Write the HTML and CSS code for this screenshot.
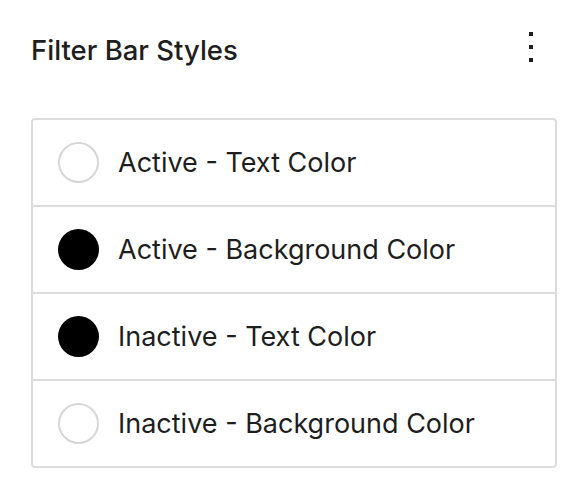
FILE: index.html
```html
<!DOCTYPE html>
<html>
<head>
<meta charset="utf-8">
<link rel="stylesheet" href="styles.css">
</head>
<body>
<div class="panel">
  <div class="header">
    <h2 class="title">Filter Bar Styles</h2>
    <button class="more" aria-label="Options">
      <svg width="6" height="32" viewBox="0 0 6 32"><rect x="1" y="1" width="4" height="4" fill="#1e1e1e"/><rect x="1" y="14" width="4" height="4" fill="#1e1e1e"/><rect x="1" y="27" width="4" height="4" fill="#1e1e1e"/></svg>
    </button>
  </div>
  <div class="list">
    <div class="row"><span class="swatch empty"></span><span class="label">Active - Text Color</span></div>
    <div class="row"><span class="swatch filled"></span><span class="label">Active - Background Color</span></div>
    <div class="row"><span class="swatch filled"></span><span class="label">Inactive - Text Color</span></div>
    <div class="row"><span class="swatch empty"></span><span class="label">Inactive - Background Color</span></div>
  </div>
</div>
</body>
</html>
```
FILE: styles.css
```css
html, body {
  margin: 0;
  padding: 0;
  background: #fff;
}
body {
  font-family: Inter, "Noto Sans", sans-serif;
  color: #1e1e1e;
}
.panel {
  padding: 30px 26px 0 31px;
}
.header {
  display: flex;
  justify-content: space-between;
  align-items: center;
  height: 40px;
}
.title {
  margin: 0;
  font-size: 27.5px;
  font-weight: 500;
  letter-spacing: 0;
}
.more {
  border: 0;
  background: none;
  padding: 0;
  margin-right: 23px;
  display: flex;
  margin-top: -6px;
}
.list {
  margin-top: 48px;
  border: 2px solid #dcdcdc;
  border-radius: 4px;
}
.row {
  display: flex;
  align-items: center;
  height: 85px;
  padding-left: 25px;
  gap: 19px;
  border-bottom: 2px solid #dcdcdc;
}
.row:last-child {
  border-bottom: 0;
}
.swatch {
  width: 41px;
  height: 41px;
  border-radius: 50%;
  box-sizing: border-box;
  flex: none;
}
.swatch.empty {
  border: 2px solid #d6d6d6;
  background: #fff;
}
.swatch.filled {
  background: #000;
}
.label {
  font-size: 27px;
  font-weight: 400;
}
```
